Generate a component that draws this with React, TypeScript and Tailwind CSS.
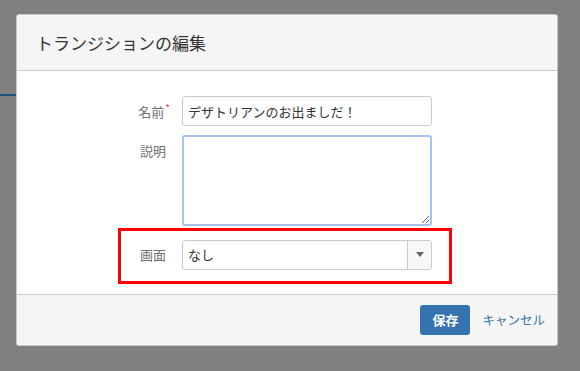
import { ChangeEvent, useState } from 'react';

const font = { fontFamily: '"Noto Sans CJK JP", "Noto Sans", sans-serif' };

function FieldLabel({ text, required }: { text: string; required?: boolean }) {
    return (
        <span className="text-[13px] leading-none text-[#707070]">
            {text}
            {required && <sup className="ml-[1px] text-[10px] text-[#d04437]">*</sup>}
        </span>
    );
}

export default function App() {
    const [name, setName] = useState('デザトリアンのお出ましだ！');
    const [desc, setDesc] = useState('');

    return (
        <div className="relative h-[371px] w-[580px] overflow-hidden bg-[#808080]" style={font}>
            {/* page behind the dialog */}
            <div className="mt-[94px] h-[2px] w-[16px] bg-[#205081]"></div>

            {/* Dialog */}
            <div className="absolute left-[16px] top-[14px] flex h-[332px] w-[542px] flex-col overflow-hidden rounded-[3px] border border-[#c8c8c8] bg-white">
                <div className="flex h-[56px] shrink-0 items-center border-b border-[#cccccc] bg-[#f5f5f5] px-[19px]">
                    <h2 className="text-[17px] font-normal text-[#333333]">トランジションの編集</h2>
                </div>

                <div className="flex flex-1 flex-col pt-[25px]">
                    <div className="grid grid-cols-[153px_250px] gap-x-[12px] gap-y-[9px]">
                        <div className="flex h-[30px] items-center justify-end">
                            <FieldLabel text="名前" required />
                        </div>
                        <input
                            value={name}
                            onChange={(e: ChangeEvent<HTMLInputElement>) => setName(e.target.value)}
                            className="h-[30px] w-[250px] rounded-[3px] border border-[#cccccc] px-[5px] text-[13px] text-[#333333] outline-none"
                        />

                        <div className="flex justify-end pr-[4px] pt-[9px]">
                            <FieldLabel text="説明" />
                        </div>
                        <textarea
                            value={desc}
                            onChange={(e: ChangeEvent<HTMLTextAreaElement>) => setDesc(e.target.value)}
                            className="h-[91px] w-[250px] resize-y rounded-[3px] border-2 border-[#a6c2f0] px-[5px] text-[13px] text-[#333333] outline-none"
                        />
                    </div>

                    <div className="ml-[101px] mt-[2px] flex h-[56px] w-[334px] items-center gap-[12px] border-[3px] border-[#ff0000] pb-[3px]">
                        <div className="flex w-[49px] justify-end pr-[4px]">
                            <FieldLabel text="画面" />
                        </div>
                        <div className="flex h-[30px] w-[250px] overflow-hidden rounded-[3px] border border-[#cccccc] bg-white">
                            <span className="flex flex-1 items-center px-[5px] text-[13px] text-[#333333]">なし</span>
                            <span className="flex w-[24px] items-center justify-center border-l border-[#cccccc] bg-[#f7f7f7]">
                                <svg width="8" height="5" viewBox="0 0 8 5"><path d="M0 0h8L4 5z" fill="#666666" /></svg>
                            </span>
                        </div>
                    </div>
                </div>

                <div className="flex h-[51px] shrink-0 items-center justify-end gap-[12px] border-t border-[#cccccc] bg-[#f5f5f5] pr-[12px]">
                    <button className="h-[30px] w-[50px] rounded-[3px] bg-[#3572b0] text-[13px] font-bold text-white">保存</button>
                    <a href="#" className="text-[12.5px] text-[#3572b0]">キャンセル</a>
                </div>
            </div>
        </div>
    );
}
